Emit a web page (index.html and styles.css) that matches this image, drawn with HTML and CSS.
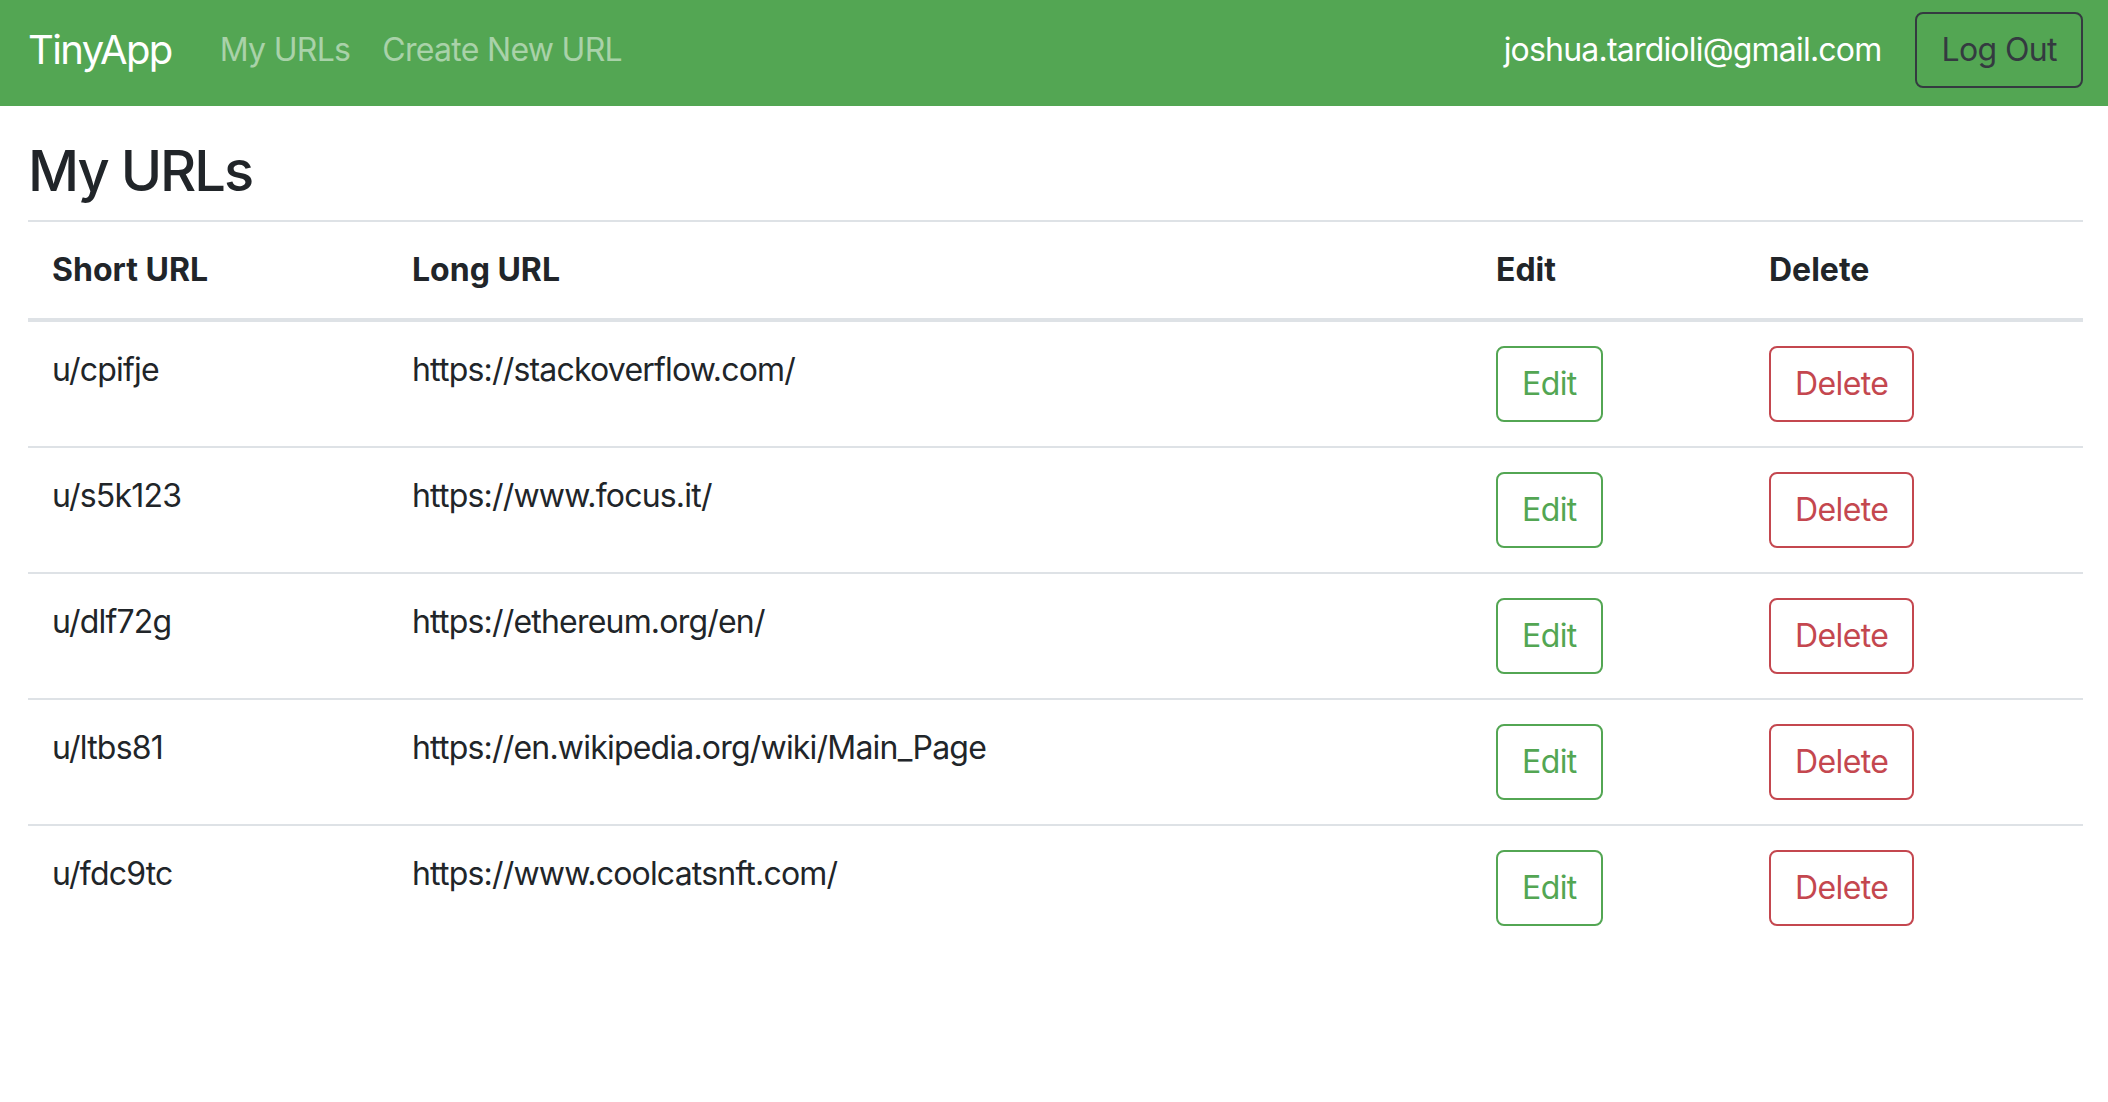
FILE: index.html
```html
<!DOCTYPE html>
<html lang="en">
<head>
<meta charset="utf-8">
<title>TinyApp - My URLs</title>
<link rel="stylesheet" href="styles.css">
</head>
<body>
<nav class="navbar">
  <a class="brand" href="#">TinyApp</a>
  <ul class="nav">
    <li><a class="nav-link" href="#">My URLs</a></li>
    <li><a class="nav-link" href="#">Create New URL</a></li>
  </ul>
  <div class="nav-right">
    <span class="email">joshua.tardioli@gmail.com</span>
    <button class="btn btn-dark">Log Out</button>
  </div>
</nav>
<main class="container">
  <h1 class="title">My URLs</h1>
  <table class="table">
    <thead>
      <tr>
        <th class="col-short">Short URL</th>
        <th class="col-long">Long URL</th>
        <th class="col-edit">Edit</th>
        <th class="col-del">Delete</th>
      </tr>
    </thead>
    <tbody>
      <tr>
        <td>u/cpifje</td>
        <td>https://stackoverflow.com/</td>
        <td><button class="btn btn-green">Edit</button></td>
        <td><button class="btn btn-red">Delete</button></td>
      </tr>
      <tr>
        <td>u/s5k123</td>
        <td>https://www.focus.it/</td>
        <td><button class="btn btn-green">Edit</button></td>
        <td><button class="btn btn-red">Delete</button></td>
      </tr>
      <tr>
        <td>u/dlf72g</td>
        <td>https://ethereum.org/en/</td>
        <td><button class="btn btn-green">Edit</button></td>
        <td><button class="btn btn-red">Delete</button></td>
      </tr>
      <tr>
        <td>u/ltbs81</td>
        <td>https://en.wikipedia.org/wiki/Main_Page</td>
        <td><button class="btn btn-green">Edit</button></td>
        <td><button class="btn btn-red">Delete</button></td>
      </tr>
      <tr>
        <td>u/fdc9tc</td>
        <td>https://www.coolcatsnft.com/</td>
        <td><button class="btn btn-green">Edit</button></td>
        <td><button class="btn btn-red">Delete</button></td>
      </tr>
    </tbody>
  </table>
</main>
</body>
</html>
```

FILE: styles.css
```css
* { box-sizing: border-box; }

body {
  margin: 0;
  font-family: Inter, "Noto Sans", "Liberation Sans", sans-serif;
  font-size: 32px;
  line-height: 48px;
  letter-spacing: -0.8px;
  color: #212529;
  background: #fff;
}

.navbar {
  display: flex;
  align-items: center;
  height: 106px;
  padding: 12px 25px 19px 28px;
  background: #53a653;
}

.brand {
  font-size: 40px;
  line-height: 60px;
  letter-spacing: -1.6px;
  color: #fff;
  text-decoration: none;
  margin-right: 32px;
}

.nav {
  display: flex;
  list-style: none;
  margin: 0;
  padding: 0;
}

.nav-link {
  display: block;
  padding: 0 16px;
  letter-spacing: -0.7px;
  color: rgba(255, 255, 255, 0.5);
  text-decoration: none;
}

.nav-right {
  margin-left: auto;
  display: flex;
  align-items: center;
  gap: 34px;
}

.email {
  color: #fff;
}

.btn {
  font-family: inherit;
  font-size: 32px;
  line-height: 48px;
  letter-spacing: -0.6px;
  padding: 12px 24px;
  border: 2px solid;
  border-radius: 8px;
  background: transparent;
  cursor: pointer;
}

.btn-dark {
  color: #343a40;
  border-color: #343a40;
}

.btn-green {
  color: #53a653;
  border-color: #53a653;
}

.btn-red {
  color: #c4474f;
  border-color: #c4474f;
}

.container {
  padding: 0 25px 0 28px;
}

.title {
  font-size: 56px;
  font-weight: 500;
  line-height: 1.2;
  letter-spacing: -2px;
  margin: 32px 0 15px;
}

.table {
  width: 100%;
  border-collapse: collapse;
}

.table th,
.table td {
  padding: 24px;
  text-align: left;
  vertical-align: top;
  border-top: 2px solid #dee2e6;
}

.table thead th {
  font-weight: 700;
  letter-spacing: 0;
  vertical-align: bottom;
  border-bottom: 4px solid #dee2e6;
}

.col-short { width: 360px; }
.col-long { width: 1084px; }
.col-edit { width: 273px; }
```
